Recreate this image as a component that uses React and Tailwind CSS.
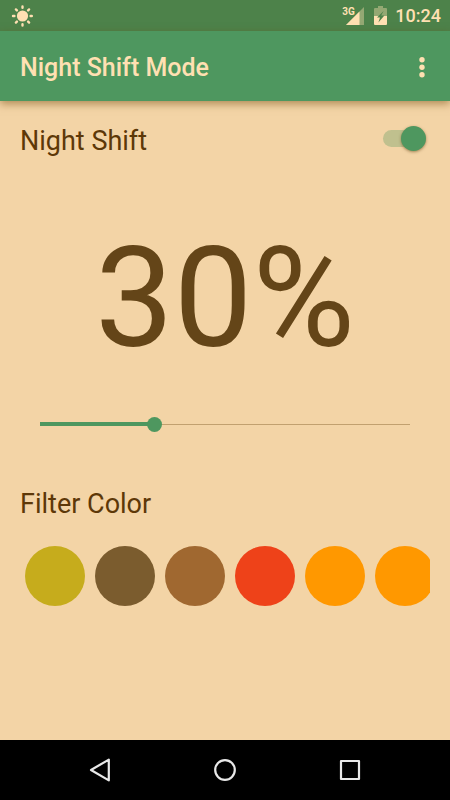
import React, { useState } from 'react';

const COLORS = [
  { id: 'olive', label: 'Olive', style: 'bg-[#c6ac1c]' },
  { id: 'umber', label: 'Umber', style: 'bg-[#7b5c2e]' },
  { id: 'sienna', label: 'Sienna', style: 'bg-[#a06830]' },
  { id: 'red', label: 'Red', style: 'bg-[#ee4219]' },
  { id: 'orange', label: 'Orange', style: 'bg-[#ff9800]' },
  { id: 'amber', label: 'Amber', style: 'bg-[#ff9800]' },
];

const SunIcon = () => (
  <svg className="w-[22px] h-[22px]" viewBox="0 0 22 22" fill="none" stroke="currentColor" strokeWidth="2.4" strokeLinecap="round" aria-hidden="true">
    <circle cx="11.5" cy="11" r="5.6" fill="currentColor" stroke="none" />
    <path d="M11.5 1.4v1.4M11.5 19.2v1.4M2 11h1.4M19.6 11h1.2M4.9 4.4l1 1M17.1 16.6l1 1M4.9 17.6l1-1M17.1 5.4l1-1" />
  </svg>
);

const SignalIcon = () => (
  <svg className="w-[18px] h-[18px]" viewBox="0 0 18 18" fill="currentColor" aria-hidden="true">
    <path d="M18 0v18H0z" opacity="0.4" />
    <path d="M13.5 4.5V18H0z" />
  </svg>
);

const BatteryIcon = () => (
  <svg className="w-[13px] h-[19px]" viewBox="0 0 13 19" fill="currentColor" aria-hidden="true">
    <path d="M4 0h5v2h3q1 0 1 1v7H0V3q0-1 1-1h3z" opacity="0.4" />
    <path d="M0 10h13v8q0 1-1 1H1q-1 0-1-1z" />
    <path d="M9.6 5L3 11.6h3L4.4 16.6 10.4 9.6H7.2z" fill="#4d824a" />
  </svg>
);

const StatusBar = () => (
  <div className="h-[31px] shrink-0 flex items-center justify-between pl-[11px] pr-[9px] bg-[#4d824a] text-[#ffe0b2]">
    <SunIcon />
    <div className="flex items-center">
      <div className="relative">
        <SignalIcon />
        <span className="absolute -left-1 top-0 text-[10px] leading-[10px] font-bold">3G</span>
      </div>
      <div className="ml-[10px] mr-2">
        <BatteryIcon />
      </div>
      <time className="pt-px text-lg leading-6 font-medium">10:24</time>
    </div>
  </div>
);

const AppBar = () => (
  <header className="relative h-[70px] shrink-0 flex items-center justify-between pt-[3px] pl-5 pr-4 bg-[#4e975f] text-[#ffe0b2] shadow-[0_3px_8px_rgba(110,70,10,0.5)]">
    <h1 className="text-[25px] leading-8 font-medium">Night Shift Mode</h1>
    <button type="button" aria-label="More options" className="w-6 h-8 flex items-center justify-center">
      <svg className="w-[6px] h-[22px]" viewBox="0 0 6 22" fill="currentColor" aria-hidden="true">
        <circle cx="3" cy="2.7" r="2.7" />
        <circle cx="3" cy="10.2" r="2.7" />
        <circle cx="3" cy="17.7" r="2.7" />
      </svg>
    </button>
  </header>
);

const Toggle = ({ id, checked, onChange }) => (
  <input
    id={id}
    type="checkbox"
    role="switch"
    checked={checked}
    onChange={e => onChange(e.target.checked)}
    className="appearance-none flex items-center w-[38px] h-[17px] mb-[6px] rounded-full cursor-pointer bg-[#c1a06c]/50 checked:bg-[#c0c08e] before:content-[''] before:block before:w-[25px] before:h-[25px] before:rounded-full before:shrink-0 before:bg-[#f5ead6] before:shadow-[0_1px_3px_rgba(80,50,0,0.5)] checked:before:bg-[#4e975f] checked:before:ml-[18px]"
  />
);

const NavBar = () => (
  <nav className="h-[60px] shrink-0 flex items-center justify-center gap-[101px] bg-black text-[#e8e8e8]">
    <button type="button" aria-label="Back">
      <svg className="w-6 h-6" viewBox="0 0 24 24" fill="none" stroke="currentColor" strokeWidth="2.2" strokeLinejoin="round" aria-hidden="true">
        <path d="M20.8 1.6v20.8L3 12z" />
      </svg>
    </button>
    <button type="button" aria-label="Home">
      <svg className="w-6 h-6" viewBox="0 0 24 24" fill="none" stroke="currentColor" strokeWidth="2.2" aria-hidden="true">
        <circle cx="12" cy="12" r="9.8" />
      </svg>
    </button>
    <button type="button" aria-label="Recent apps">
      <svg className="w-6 h-6" viewBox="0 0 24 24" fill="none" stroke="currentColor" strokeWidth="2.2" strokeLinejoin="round" aria-hidden="true">
        <path d="M3 3h18v18H3z" />
      </svg>
    </button>
  </nav>
);

const App = () => {
  const [enabled, setEnabled] = useState(true);
  const [level, setLevel] = useState(30);
  const [color, setColor] = useState('orange');

  return (
    <div className="min-h-screen flex flex-col bg-[#f3d4a6] font-['Roboto',sans-serif] text-[#5d3808]">
      <StatusBar />
      <AppBar />

      <main className="flex-1 px-5 pt-5">
        <div className="flex items-center justify-between pr-[9px]">
          <label htmlFor="night-shift" className="text-[27px] leading-10">Night Shift</label>
          <Toggle id="night-shift" checked={enabled} onChange={setEnabled} />
        </div>

        <output htmlFor="level" className="block mt-14 text-center text-[140px] leading-[162px] text-[#644518]">
          {level}%
        </output>

        <div className="mt-[35px] px-5">
          <input
            id="level"
            type="range"
            min="0"
            max="100"
            value={level}
            aria-label="Filter intensity"
            onChange={e => setLevel(Number(e.target.value))}
            style={{ backgroundSize: `${level}% 4px, 100% 1px` }}
            className="appearance-none block w-full h-5 cursor-pointer bg-[linear-gradient(#4e975f,#4e975f),linear-gradient(#c1a06f,#c1a06f)] bg-no-repeat bg-[position:left_center] [&::-webkit-slider-thumb]:appearance-none [&::-webkit-slider-thumb]:w-[15px] [&::-webkit-slider-thumb]:h-[15px] [&::-webkit-slider-thumb]:rounded-full [&::-webkit-slider-thumb]:bg-[#4e975f]"
          />
        </div>

        <fieldset className="mt-[50px] min-w-0">
          <legend className="text-[27px] leading-10">Filter Color</legend>
          <div className="mt-[22px] flex gap-[10px] pl-[5px] overflow-x-auto [scrollbar-width:none]">
            {COLORS.map(c => (
              <input
                key={c.id}
                type="radio"
                name="filter-color"
                value={c.id}
                aria-label={c.label}
                checked={color === c.id}
                onChange={() => setColor(c.id)}
                className={`appearance-none w-[60px] h-[60px] shrink-0 rounded-full cursor-pointer ${c.style}`}
              />
            ))}
          </div>
        </fieldset>
      </main>

      <NavBar />
    </div>
  );
};

export default App;
